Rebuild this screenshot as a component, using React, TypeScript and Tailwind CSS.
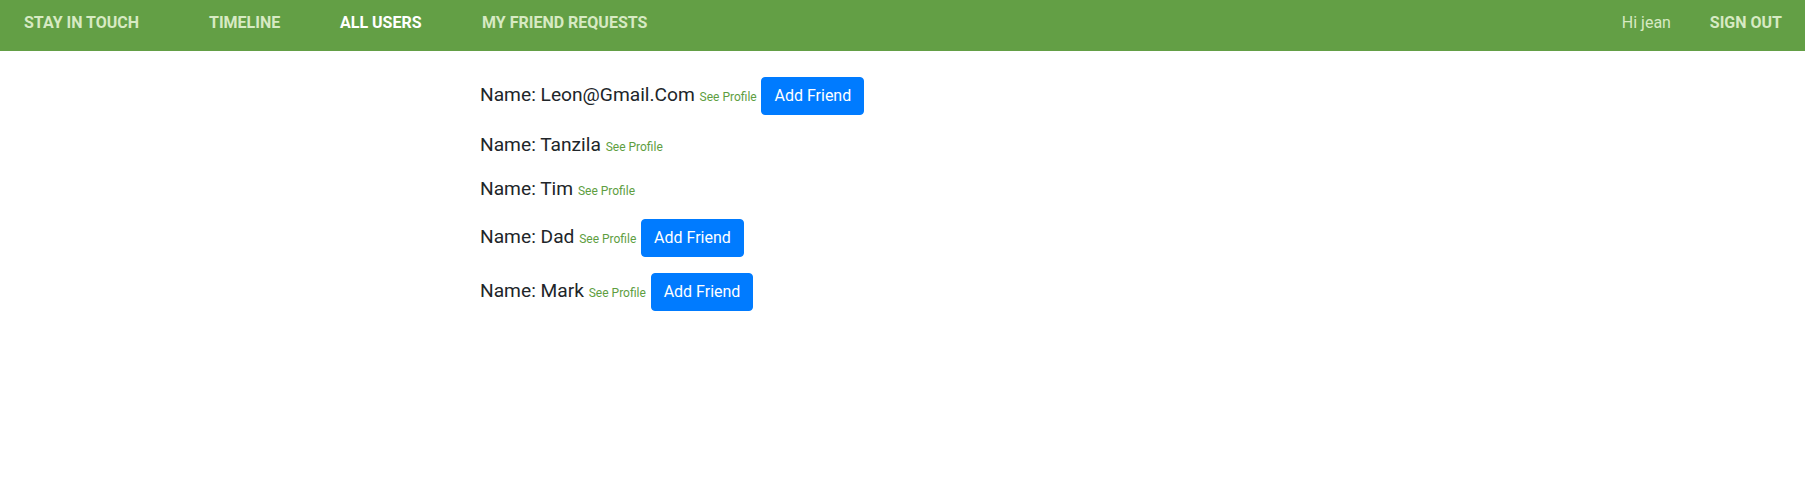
const users = [
  { name: 'Leon@Gmail.Com', canAdd: true },
  { name: 'Tanzila', canAdd: false },
  { name: 'Tim', canAdd: false },
  { name: 'Dad', canAdd: true },
  { name: 'Mark', canAdd: true },
]

const Navbar = () => {
  return (
    <nav className="flex h-[51px] items-start justify-between bg-[#639f45] pt-[11px] pl-[24px] pr-[23px] text-base leading-6">
      <div className="flex">
        <a href="#" className="w-[185px] font-bold text-[#d7eac3]">
          STAY IN TOUCH
        </a>
        <a href="#" className="w-[131px] font-bold text-[#d7eac3]">
          TIMELINE
        </a>
        <a href="#" className="w-[142px] font-bold text-white">
          ALL USERS
        </a>
        <a href="#" className="font-bold text-[#d7eac3]">
          MY FRIEND REQUESTS
        </a>
      </div>
      <div className="flex">
        <span className="w-[88px] text-[#d7eac3]">Hi jean</span>
        <a href="#" className="font-bold text-[#d7eac3]">
          SIGN OUT
        </a>
      </div>
    </nav>
  )
}

export default function App() {
  return (
    <div className="min-h-[480px] bg-white font-['Roboto',sans-serif] text-[#212529]">
      <Navbar />
      <div className="ml-[480px] mt-[26px]">
        {users.map((user) => (
          <div key={user.name} className="mb-4 text-[19.2px] leading-[28px]">
            Name: {user.name}{' '}
            <a href="#" className="text-[12px] leading-[1.5] text-[#5e9e3f]">
              See Profile
            </a>{' '}
            {user.canAdd && (
              <button className="inline-block rounded border border-[#007bff] bg-[#007bff] px-3 py-[6px] align-middle text-base leading-6 text-white">
                Add Friend
              </button>
            )}
          </div>
        ))}
      </div>
    </div>
  )
}
